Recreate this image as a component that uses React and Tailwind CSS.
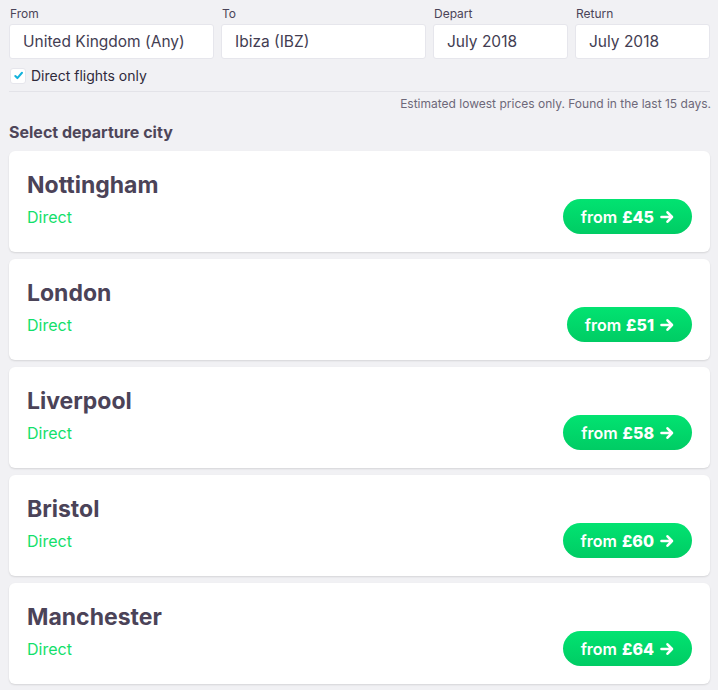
import React from "react";

const cities = [
  { name: "Nottingham", price: "£45" },
  { name: "London", price: "£51" },
  { name: "Liverpool", price: "£58" },
  { name: "Bristol", price: "£60" },
  { name: "Manchester", price: "£64" },
];

function Field({ label, value, className }) {
  return (
    <div className={className}>
      <div className="text-[12px] leading-[14px] text-[#4a4458] mb-[3px] pl-[1px]">{label}</div>
      <div className="h-[35px] bg-white rounded-[3px] border border-[#e6e6ec] flex items-center pl-[13px] text-[15.5px] text-[#433d52]">
        {value}
      </div>
    </div>
  );
}

function Arrow() {
  return (
    <svg width="16" height="16" viewBox="0 0 16 16" fill="none" stroke="white" strokeWidth="2.6" strokeLinecap="round" strokeLinejoin="round">
      <path d="M2.5 8h10.5M8.5 3.3L13 8l-4.5 4.7" />
    </svg>
  );
}

export default function App() {
  return (
    <div
      className="w-[718px] h-[690px] overflow-hidden bg-[#f1f1f4] px-[9px] pt-[7px]"
      style={{ fontFamily: "Inter, 'Noto Sans', sans-serif" }}
    >
      <div className="flex gap-[7px] mr-[-1px]">
        <Field label="From" value="United Kingdom (Any)" className="w-[205px] shrink-0" />
        <Field label="To" value="Ibiza (IBZ)" className="w-[205px] shrink-0" />
        <Field label="Depart" value="July 2018" className="w-[135px] shrink-0" />
        <Field label="Return" value="July 2018" className="w-[135px] shrink-0" />
      </div>
      <div className="flex items-center gap-[5px] mt-[6px] pl-[1px]">
        <div className="w-[16px] h-[16px] bg-white rounded-[3px] border border-[#e6e6ec] flex items-center justify-center">
          <svg width="11" height="11" viewBox="0 0 12 12" fill="none" stroke="#14b3dc" strokeWidth="2.2" strokeLinecap="round" strokeLinejoin="round">
            <path d="M2.5 6.5l2.3 2.3L9.8 3" />
          </svg>
        </div>
        <span className="text-[14px] text-[#2f2a3b]">Direct flights only</span>
      </div>
      <div className="h-px bg-[#e3e3e8] mt-[5px] mr-[-1px]" />
      <div className="text-right text-[12px] text-[#6d6879] mt-[3px] mr-[-2px]">
        Estimated lowest prices only. Found in the last 15 days.
      </div>
      <div className="text-[16px] font-bold text-[#4e4659] mt-[7px]">Select departure city</div>
      <div className="flex flex-col gap-[7px] mt-[7px] mr-[-1px]">
        {cities.map((c) => (
          <div
            key={c.name}
            className="h-[101px] bg-white rounded-[6px] shadow-[0_1px_2px_rgba(0,0,0,0.12)] flex justify-between pl-[18px] pr-[18px]"
          >
            <div className="flex flex-col pt-[20px]">
              <div className="text-[23px] font-bold text-[#4b4358] leading-[28px]">{c.name}</div>
              <div className="text-[16px] text-[#13e06a] mt-[8px] leading-[20px]">Direct</div>
            </div>
            <div className="pt-[48px]">
              <div className="h-[35px] rounded-full bg-gradient-to-b from-[#02e371] to-[#00cc64] flex items-center pl-[18px] pr-[17px] gap-[5px] text-white text-[16px]">
                <span className="font-semibold">from</span>
                <span className="font-extrabold">{c.price}</span>
                <Arrow />
              </div>
            </div>
          </div>
        ))}
      </div>
    </div>
  );
}
